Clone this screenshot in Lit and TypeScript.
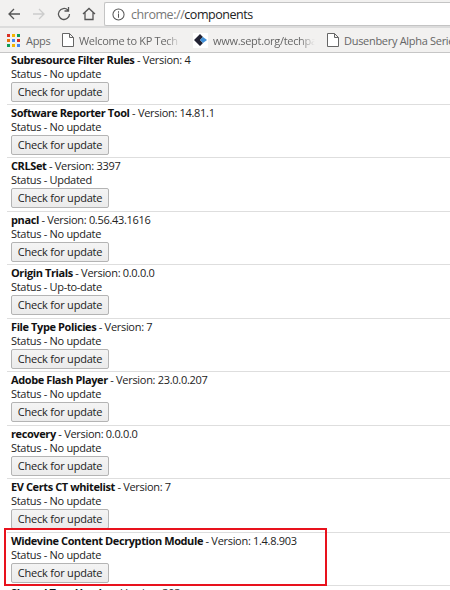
import { LitElement, html, css } from "lit";
import { customElement } from "lit/decorators.js";

const rows = [
  ["Subresource Filter Rules", "4", "No update"],
  ["Software Reporter Tool", "14.81.1", "No update"],
  ["CRLSet", "3397", "Updated"],
  ["pnacl", "0.56.43.1616", "No update"],
  ["Origin Trials", "0.0.0.0", "Up-to-date"],
  ["File Type Policies", "7", "No update"],
  ["Adobe Flash Player", "23.0.0.207", "No update"],
  ["recovery", "0.0.0.0", "No update"],
  ["EV Certs CT whitelist", "7", "No update"],
  ["Widevine Content Decryption Module", "1.4.8.903", "No update"],
  ["Shared Tree Header", "303", "No update"],
];

const page = html`<svg class="pg" viewBox="0 0 12 14"><path d="M.5 .5h7l4 4v9h-11z M7.500 .5v4h4" fill="#fff" stroke="#666"/></svg>`;

@customElement("app-root")
export class AppRoot extends LitElement {
  static styles = css`
    :host { display: block; width: 450px; height: 590px; overflow: hidden; background: #fff; font-family: "Open Sans", "Noto Sans", sans-serif; font-size: 11px; letter-spacing: -0.3px; color: #222; position: relative; }
    .toolbar { height: 26px; box-sizing: border-box; background: #f2f1f0; display: flex; align-items: flex-start; padding: 2px 0 0 1px; }
    .nav { width: 25px; height: 24px; display: flex; align-items: center; justify-content: center; flex: none; }
    .nav svg { width: 16px; height: 16px; fill: none; stroke: #555; stroke-width: 1.300; }
    .nav .off { stroke: #ccc; }
    .omni { margin-left: 3px; flex: 1; height: 24px; box-sizing: border-box; background: #fff; border: 1px solid #c4c4c4; border-right: none; border-radius: 2px 0 0 2px; display: flex; align-items: center; padding-left: 7px; font-size: 12.500px; letter-spacing: -0.45px; color: #777; white-space: nowrap; }
    .omni svg { width: 13px; height: 13px; margin-right: 6px; fill: none; stroke: #555; stroke-width: 1.100; flex: none; }
    .omni b { font-weight: 400; color: #222; }
    .bar { height: 26px; box-sizing: border-box; background: #f2f1f0; border-top: 2px solid #dcdcdc; box-shadow: 0 1px 0 #c6c6c6; position: relative; display: flex; align-items: center; color: #666; white-space: nowrap; }
    .bm { display: flex; align-items: center; overflow: hidden; flex: none; }
    .grid { display: grid; grid-template: repeat(3, 3px) / repeat(3, 3px); gap: 2px; margin: 0 6px 0 7px; flex: none; }
    .grid i { display: block; }
    .apps { width: 36px; }
    .pg { width: 12px; height: 14px; margin-right: 5px; flex: none; }
    .fade { -webkit-mask-image: linear-gradient(90deg, #000 85%, transparent); mask-image: linear-gradient(90deg, #000 85%, transparent); overflow: hidden; }
    .logo { margin-right: 5px; flex: none; }
    .w1 { width: 119px; }
    .w2 { width: 122px; margin-left: 12px; }
    .w3 { margin-left: 12px; }
    .row { height: 53.500px; box-sizing: border-box; border-bottom: 1px solid #dedede; margin-left: 7px; padding: 1px 0 0 4px; line-height: 14px; }
    .row:first-child { height: 52.500px; }
    .row:last-child { padding-top: 0; }
    .t, .s { white-space: nowrap; }
    .t b { font-weight: 700; color: #111; letter-spacing: -0.4px; }
    button { display: block; margin-top: 1px; width: 98px; height: 20px; padding: 0; font: inherit; letter-spacing: -0.2px; color: #222; background: linear-gradient(#f4f4f4, #ebebeb); border: 1px solid #b4b4b4; border-radius: 2px; }
    .mark { position: absolute; left: 4px; top: 528px; width: 323px; height: 58px; box-sizing: border-box; border: 2px solid #e8121d; }
  `;

  render() {
    const colors = ["#d93025","#f4b400","#0f9d58","#e8710a","#4285f4","#d93025","#0f9d58","#f4b400","#4285f4"];
    return html`
      <div class="toolbar">
        <div class="nav"><svg viewBox="0 0 16 16"><path d="M14 8H3M8 3 3 8l5 5"/></svg></div>
        <div class="nav"><svg class="off" viewBox="0 0 16 16"><path d="M2 8h11M8 3l5 5-5 5"/></svg></div>
        <div class="nav"><svg viewBox="0 0 16 16"><path d="M13.500 8a5.500 5.500 0 1 1-1.600-3.900M12.500 1v4H8.500"/></svg></div>
        <div class="nav"><svg viewBox="0 0 16 16"><path d="M2 8 8 2.500 14 8M4 6.500V13.500H12V6.500"/></svg></div>
        <div class="omni"><svg viewBox="0 0 14 14"><circle cx="7" cy="7" r="6"/><path d="M7 6v4.500M7 3.500v1.500"/></svg><span>chrome://<b>components</b></span></div>
      </div>
      <div class="bar">
        <div class="bm"><span class="grid">${colors.map((c) => html`<i style="background:${c}"></i>`)}</span><span class="apps">Apps</span></div>
        <div class="bm w1">${page}<span class="fade">Welcome to KP Tech N</span></div>
        <div class="bm w2"><svg class="logo" width="15" height="15" viewBox="0 0 15 15"><rect width="15" height="15" fill="#fff"/><path d="M7 1 1 7l6 6 3-3-3-3 3-3z" fill="#223"/><path d="M10 4 7 7l3 3 4-3z" fill="#3f8fd8"/></svg><span class="fade">www.sept.org/techpap</span></div>
        <div class="bm w3">${page}<span>Dusenbery Alpha Series</span></div>
      </div>
      <div class="list">
        ${rows.map((r) => html`<div class="row"><div class="t"><b>${r[0]}</b> - Version: ${r[1]}</div><div class="s">Status - ${r[2]}</div><button>Check for update</button></div>`)}
      </div>
      <div class="mark"></div>
    `;
  }
}
